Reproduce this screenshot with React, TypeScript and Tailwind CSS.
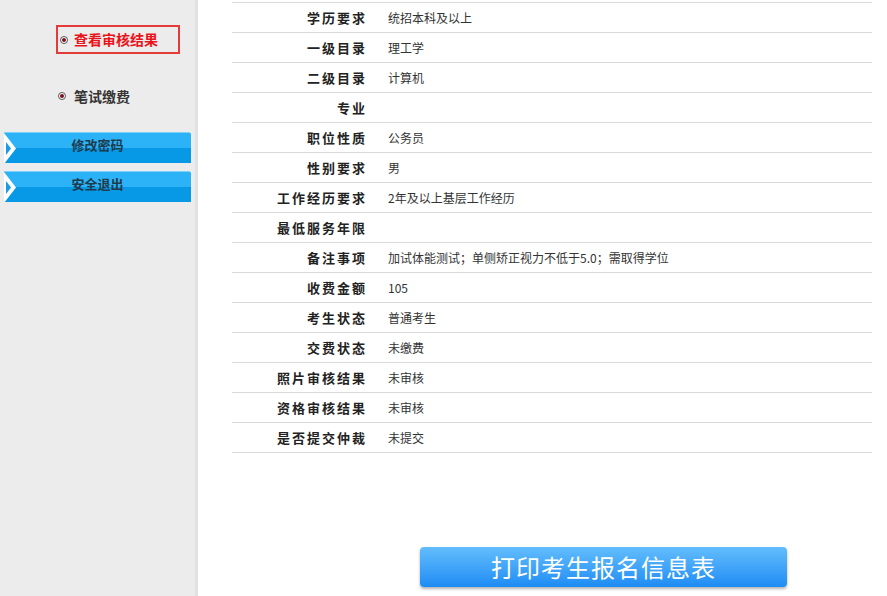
const rows: [string, string][] = [
  ["学历要求", "统招本科及以上"],
  ["一级目录", "理工学"],
  ["二级目录", "计算机"],
  ["专业", ""],
  ["职位性质", "公务员"],
  ["性别要求", "男"],
  ["工作经历要求", "2年及以上基层工作经历"],
  ["最低服务年限", ""],
  ["备注事项", "加试体能测试；单侧矫正视力不低于5.0；需取得学位"],
  ["收费金额", "105"],
  ["考生状态", "普通考生"],
  ["交费状态", "未缴费"],
  ["照片审核结果", "未审核"],
  ["资格审核结果", "未审核"],
  ["是否提交仲裁", "未提交"],
]

const Bullet = () => (
  <span className="inline-flex h-[8px] w-[8px] items-center justify-center rounded-full border border-[#555] bg-white">
    <span className="h-[4px] w-[4px] rounded-full bg-[#7a1020]" />
  </span>
)

const SideButton = ({ label }: { label: string }) => (
  <div className="relative ml-[4px] h-[31px] w-[187px] overflow-hidden rounded-tr-[3px] border-t border-[#7fd0fa] bg-[#0798e6]">
    <div className="h-[15px] bg-[#2cb2f6]" />
    <svg
      viewBox="0 0 12 31"
      width={12}
      height={31}
      className="absolute left-0 top-0"
      aria-hidden="true"
    >
      <path d="M0 0L12 15.5L0 31Z" fill="#ffffff" />
      <path d="M2 9L7 15.5L2 22Z" fill="#1a9be4" />
    </svg>
    <span className="absolute left-0 right-0 top-[3px] text-center text-[13px] font-bold leading-[18px] text-[#1d3b4c]">
      {label}
    </span>
  </div>
)

export default function App() {
  return (
    <div
      className="flex h-[596px] w-[887px] overflow-hidden bg-white text-[#333]"
      style={{ fontFamily: '"Noto Sans CJK SC", "Noto Sans", sans-serif' }}
    >
      <aside className="w-[198px] shrink-0 border-r-[3px] border-[#e2e2e2] bg-[#ececec]">
        <div className="ml-[56px] mt-[25px] flex h-[29px] w-[124px] items-center gap-[6px] border-2 border-[#e53a3a] pl-[2px]">
          <Bullet />
          <span className="text-[14px] font-bold text-[#e8141b]">查看审核结果</span>
        </div>
        <div className="ml-[58px] mt-[29px] flex h-[26px] items-center gap-[8px]">
          <Bullet />
          <span className="text-[14px] font-bold text-[#333]">笔试缴费</span>
        </div>
        <div className="mt-[23px] flex flex-col gap-[8px]">
          <SideButton label="修改密码" />
          <SideButton label="安全退出" />
        </div>
      </aside>

      <main className="flex flex-1 flex-col pl-[34px]">
        <div className="mt-[2px] w-[640px] border-t border-[#d9d9d9]">
          {rows.map(([label, value]) => (
            <div
              key={label}
              className="flex h-[30px] items-center border-b border-[#d9d9d9]"
            >
              <div className="w-[137px] pr-[2px] text-right text-[13px] font-bold tracking-[2px] text-[#222]">
                {label}
              </div>
              <div className="pl-[19px] text-[12px] text-[#333]">{value}</div>
            </div>
          ))}
        </div>
        <div className="ml-[188px] mt-[94px]">
          <button
            type="button"
            className="flex h-[40px] w-[367px] items-center justify-center rounded-[4px] bg-gradient-to-b from-[#62bdfc] to-[#1b8cf4] text-[24px] tracking-[1px] text-white shadow-[0_2px_3px_rgba(0,0,0,0.3)]"
          >
            打印考生报名信息表
          </button>
        </div>
      </main>
    </div>
  )
}
